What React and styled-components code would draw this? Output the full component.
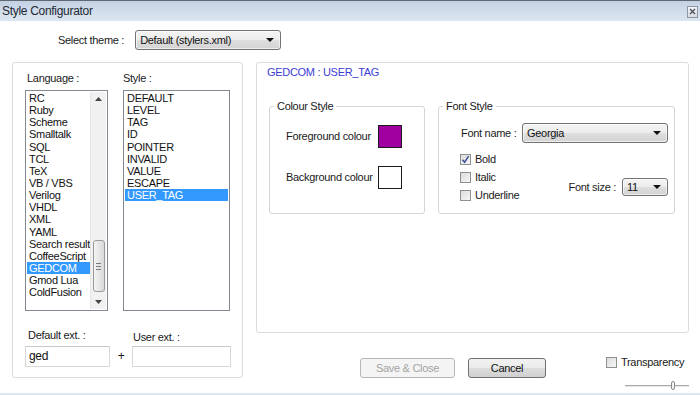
import React from "react";
import styled, { createGlobalStyle } from "styled-components";

const Global = createGlobalStyle`
  html, body { margin: 0; padding: 0; background: #fff; }
  body { font-family: "Liberation Sans", Arial, sans-serif; font-size: 11px; letter-spacing: -0.3px; color: #1a1a1a; }
`;

const Window = styled.div`
  width: 700px;
  height: 395px;
  display: flex;
  flex-direction: column;
  overflow: hidden;
  background: #fff;
  box-sizing: border-box;
  border-bottom: 2px solid #dbe7f1;
`;

const TitleBar = styled.div`
  height: 21px;
  flex: none;
  box-sizing: border-box;
  border-top: 1px solid #5f6873;
  background: linear-gradient(#c2d1e3, #d2deec 55%, #dce6f1);
  display: flex;
  align-items: center;
  justify-content: space-between;
  padding: 0 2px 0 2px;
  font-size: 12px;
  color: #1f2833;
`;

const CloseBox = styled.div`
  width: 9px;
  height: 10px;
  border: 1px solid #8d96a1;
  background: linear-gradient(#f3f5f8, #d6dce4);
  display: flex;
  align-items: center;
  justify-content: center;
  margin-top: 1px;
`;

const Body = styled.div`
  flex: 1;
  display: flex;
  flex-direction: column;
`;

const ThemeRow = styled.div`
  margin-top: 9px;
  padding-left: 58px;
  display: flex;
  align-items: center;
  gap: 11px;
  height: 20px;
`;

const Text = styled.span`
  line-height: 13px;
  white-space: nowrap;
`;

const Combo = styled.div`
  width: ${(p) => p.$w}px;
  height: ${(p) => p.$h}px;
  box-sizing: border-box;
  border: 1px solid #737373;
  border-radius: 3px;
  background: linear-gradient(#f4f4f4, #ececec 48%, #dedede 52%, #d3d3d3);
  display: flex;
  align-items: center;
  justify-content: space-between;
  padding: 0 6px 0 4px;
  box-shadow: inset 0 0 0 1px rgba(255,255,255,0.6);
  font-size: 11px;
  color: #111;
`;

const Arrow = styled.span`
  width: 0;
  height: 0;
  border-left: 4px solid transparent;
  border-right: 4px solid transparent;
  border-top: 4px solid #111;
`;

const Panels = styled.div`
  margin-top: 12px;
  display: flex;
  padding-left: 12px;
  gap: 13px;
`;

const LeftPanel = styled.div`
  width: 231px;
  height: 316px;
  flex: none;
  box-sizing: border-box;
  border: 1px solid #dcdcdc;
  border-radius: 3px;
  padding-left: 12px;
  display: flex;
  flex-direction: column;
`;

const ListsRow = styled.div`
  display: flex;
  gap: 15px;
`;

const Column = styled.div`
  display: flex;
  flex-direction: column;
`;

const FieldLabel = styled.div`
  line-height: 13px;
  white-space: nowrap;
  margin: ${(p) => p.$mt}px 0 ${(p) => p.$mb}px ${(p) => p.$ml}px;
`;

const ListBox = styled.div`
  width: ${(p) => p.$w}px;
  height: 221px;
  box-sizing: border-box;
  border: 1px solid #848991;
  display: flex;
  padding: 1px;
  background: #fff;
`;

const Items = styled.div`
  flex: 1;
  min-width: 0;
  display: flex;
  flex-direction: column;
`;

const Item = styled.div`
  height: 12.15px;
  line-height: 12px;
  padding-left: 2px;
  white-space: nowrap;
  overflow: hidden;
  background: ${(p) => (p.$sel ? "#3399ff" : "transparent")};
  color: ${(p) => (p.$sel ? "#fff" : "#111")};
`;

const ScrollBar = styled.div`
  width: 15px;
  flex: none;
  background: #f1f1f1;
  border-left: 1px solid #e6e6e6;
  display: flex;
  flex-direction: column;
  align-items: center;
`;

const ScrollArrow = styled.div`
  height: 14px;
  display: flex;
  align-items: center;
  justify-content: center;
`;

const Thumb = styled.div`
  width: 12px;
  height: 52px;
  margin-top: 134px;
  box-sizing: border-box;
  border: 1px solid #9a9a9a;
  border-radius: 3px;
  background: linear-gradient(90deg, #f4f4f4, #e6e6e6 50%, #d9d9d9);
  display: flex;
  flex-direction: column;
  align-items: center;
  justify-content: center;
  gap: 2px;
`;

const Grip = styled.div`
  width: 5px;
  height: 1px;
  background: #7a7a7a;
`;

const Spacer = styled.div`
  flex: 1;
`;

const ExtRow = styled.div`
  display: flex;
  align-items: flex-end;
`;

const Input = styled.div`
  width: ${(p) => p.$w}px;
  height: 21px;
  box-sizing: border-box;
  border: 1px solid #d8d8d8;
  border-top-color: #c8c8c8;
  background: #fff;
  padding: 0 3px;
  line-height: 19px;
  font-size: 12px;
  color: #111;
`;

const Plus = styled.div`
  width: 22px;
  height: 21px;
  line-height: 21px;
  text-align: center;
  font-size: 12px;
`;

const RightCol = styled.div`
  width: 433px;
  flex: none;
  display: flex;
  flex-direction: column;
`;

const RightPanel = styled.div`
  height: 271px;
  box-sizing: border-box;
  border: 1px solid #dcdcdc;
  border-radius: 3px;
  padding: 3px 0 0 10px;
`;

const Heading = styled.div`
  line-height: 13px;
  font-size: 11px;
  color: #3d3dd4;
`;

const GroupsRow = styled.div`
  display: flex;
  gap: 13px;
  margin: 21px 0 0 2px;
`;

const Group = styled.fieldset`
  margin: 0;
  padding: 0;
  min-width: 0;
  width: ${(p) => p.$w}px;
  height: 114px;
  box-sizing: border-box;
  border: 1px solid #d6d6d6;
  border-radius: 3px;
`;

const Legend = styled.legend`
  padding: 0 3px;
  margin-left: 4px;
  line-height: 13px;
  font-size: 11px;
  color: #1a1a1a;
`;

const ColourGrid = styled.div`
  display: grid;
  grid-template-columns: 92px 24px;
  row-gap: 18px;
  align-items: center;
  padding: 12px 0 0 16px;
`;

const Swatch = styled.div`
  width: 24px;
  height: 23px;
  box-sizing: border-box;
  border: 1px solid #1a1a1a;
  background: ${(p) => p.$c};
`;

const FontBody = styled.div`
  padding: 10px 6px 0 22px;
  display: flex;
  flex-direction: column;
`;

const FontNameRow = styled.div`
  display: flex;
  align-items: center;
`;

const FixedLabel = styled.span`
  width: ${(p) => p.$w}px;
  line-height: 13px;
  white-space: nowrap;
`;

const OptionsRow = styled.div`
  display: flex;
  margin-top: 11px;
`;

const Checks = styled.div`
  display: flex;
  flex-direction: column;
  margin-left: -1px;
`;

const CheckRow = styled.label`
  height: ${(p) => p.$h || 18}px;
  display: flex;
  align-items: flex-start;
  gap: 4px;
  line-height: 11px;
`;

const Box = styled.span`
  width: 11px;
  height: 11px;
  box-sizing: border-box;
  border: 1px solid #8e8f8f;
  background: linear-gradient(135deg, #dcdcdc, #f6f6f6);
  display: flex;
  align-items: center;
  justify-content: center;
`;

const SizeWrap = styled.div`
  margin-left: auto;
  margin-top: 12px;
  display: flex;
  align-items: center;
  gap: 6px;
`;

const BottomRow = styled.div`
  margin-top: 24px;
  display: flex;
  align-items: flex-start;
  padding-left: 104px;
`;

const Button = styled.div`
  width: ${(p) => p.$w}px;
  height: 20px;
  box-sizing: border-box;
  margin-top: 1px;
  margin-right: 13px;
  border-radius: 3px;
  border: 1px solid ${(p) => (p.$disabled ? "#b4b7ba" : "#707070")};
  background: ${(p) =>
    p.$disabled ? "#f4f4f4" : "linear-gradient(#f2f2f2, #ebebeb 48%, #dddddd 52%, #cfcfcf)"};
  color: ${(p) => (p.$disabled ? "#a3a3a3" : "#111")};
  display: flex;
  align-items: center;
  justify-content: center;
  font-size: 11px;
`;

const TransCol = styled.div`
  margin-left: 47px;
  display: flex;
  flex-direction: column;
`;

const Slider = styled.div`
  margin: 9px 0 0 19px;
  width: 64px;
  height: 9px;
  display: flex;
  align-items: center;
`;

const Track = styled.div`
  height: 2px;
  box-sizing: border-box;
  border-top: 1px solid #a9a9a9;
  border-bottom: 1px solid #e6e6e6;
  flex: ${(p) => p.$f};
`;

const SliderThumb = styled.div`
  width: 4px;
  height: 9px;
  box-sizing: border-box;
  border: 1px solid #8a8a8a;
  border-radius: 2px;
  background: #f4f4f4;
`;

const languages = [
  "RC", "Ruby", "Scheme", "Smalltalk", "SQL", "TCL", "TeX", "VB / VBS", "Verilog",
  "VHDL", "XML", "YAML", "Search result", "CoffeeScript", "GEDCOM", "Gmod Lua", "ColdFusion",
];
const styles = ["DEFAULT", "LEVEL", "TAG", "ID", "POINTER", "INVALID", "VALUE", "ESCAPE", "USER_TAG"];

const Check = ({ checked, h, children }) => (
  <CheckRow $h={h}>
    <Box>
      {checked && (
        <svg width="9" height="9" viewBox="0 0 9 9">
          <path d="M1.5 4.8 L3.6 7.2 L7.6 1.2" fill="none" stroke="#3b5194" strokeWidth="1.5" />
        </svg>
      )}
    </Box>
    <span>{children}</span>
  </CheckRow>
);

export default function App() {
  return (
    <>
      <Global />
      <Window>
        <TitleBar>
          <span>Style Configurator</span>
          <CloseBox>
            <svg width="7" height="7" viewBox="0 0 7 7">
              <path d="M1 1 L6 6 M6 1 L1 6" stroke="#4a4f57" strokeWidth="1.3" />
            </svg>
          </CloseBox>
        </TitleBar>
        <Body>
          <ThemeRow>
            <Text>Select theme :</Text>
            <Combo $w={146} $h={20}>
              <span>Default (stylers.xml)</span>
              <Arrow />
            </Combo>
          </ThemeRow>
          <Panels>
            <LeftPanel>
              <ListsRow>
                <Column>
                  <FieldLabel $mt={9} $mb={5} $ml={2}>Language :</FieldLabel>
                  <ListBox $w={83}>
                    <Items>
                      {languages.map((l) => (
                        <Item key={l} $sel={l === "GEDCOM"}>{l}</Item>
                      ))}
                    </Items>
                    <ScrollBar>
                      <ScrollArrow>
                        <svg width="7" height="4" viewBox="0 0 7 4"><path d="M0 4 L3.5 0 L7 4 Z" fill="#444" /></svg>
                      </ScrollArrow>
                      <Thumb>
                        <Grip /><Grip /><Grip />
                      </Thumb>
                      <Spacer />
                      <ScrollArrow>
                        <svg width="7" height="4" viewBox="0 0 7 4"><path d="M0 0 L7 0 L3.5 4 Z" fill="#444" /></svg>
                      </ScrollArrow>
                    </ScrollBar>
                  </ListBox>
                </Column>
                <Column>
                  <FieldLabel $mt={9} $mb={5} $ml={0}>Style :</FieldLabel>
                  <ListBox $w={107}>
                    <Items>
                      {styles.map((s) => (
                        <Item key={s} $sel={s === "USER_TAG"}>{s}</Item>
                      ))}
                    </Items>
                  </ListBox>
                </Column>
              </ListsRow>
              <ExtRow>
                <Column>
                  <FieldLabel $mt={18} $mb={4} $ml={3}>Default ext. :</FieldLabel>
                  <Input $w={85}>ged</Input>
                </Column>
                <Plus>+</Plus>
                <Column>
                  <FieldLabel $mt={20} $mb={2} $ml={1}>User ext. :</FieldLabel>
                  <Input $w={99} />
                </Column>
              </ExtRow>
            </LeftPanel>
            <RightCol>
              <RightPanel>
                <Heading>GEDCOM : USER_TAG</Heading>
                <GroupsRow>
                  <Group $w={156}>
                    <Legend>Colour Style</Legend>
                    <ColourGrid>
                      <Text>Foreground colour</Text>
                      <Swatch $c="#a000a0" />
                      <Text>Background colour</Text>
                      <Swatch $c="#ffffff" />
                    </ColourGrid>
                  </Group>
                  <Group $w={237}>
                    <Legend>Font Style</Legend>
                    <FontBody>
                      <FontNameRow>
                        <FixedLabel $w={61}>Font name :</FixedLabel>
                        <Combo $w={146} $h={20}>
                          <span>Georgia</span>
                          <Arrow />
                        </Combo>
                      </FontNameRow>
                      <OptionsRow>
                        <Checks>
                          <Check checked>Bold</Check>
                          <Check>Italic</Check>
                          <Check>Underline</Check>
                        </Checks>
                        <SizeWrap>
                          <Text>Font size :</Text>
                          <Combo $w={46} $h={18}>
                            <span>11</span>
                            <Arrow />
                          </Combo>
                        </SizeWrap>
                      </OptionsRow>
                    </FontBody>
                  </Group>
                </GroupsRow>
              </RightPanel>
              <BottomRow>
                <Button $w={95} $disabled>Save &amp; Close</Button>
                <Button $w={78}>Cancel</Button>
                <TransCol>
                  <Check h={15}>Transparency</Check>
                  <Slider>
                    <Track $f={46} />
                    <SliderThumb />
                    <Track $f={14} />
                  </Slider>
                </TransCol>
              </BottomRow>
            </RightCol>
          </Panels>
        </Body>
      </Window>
    </>
  );
}
